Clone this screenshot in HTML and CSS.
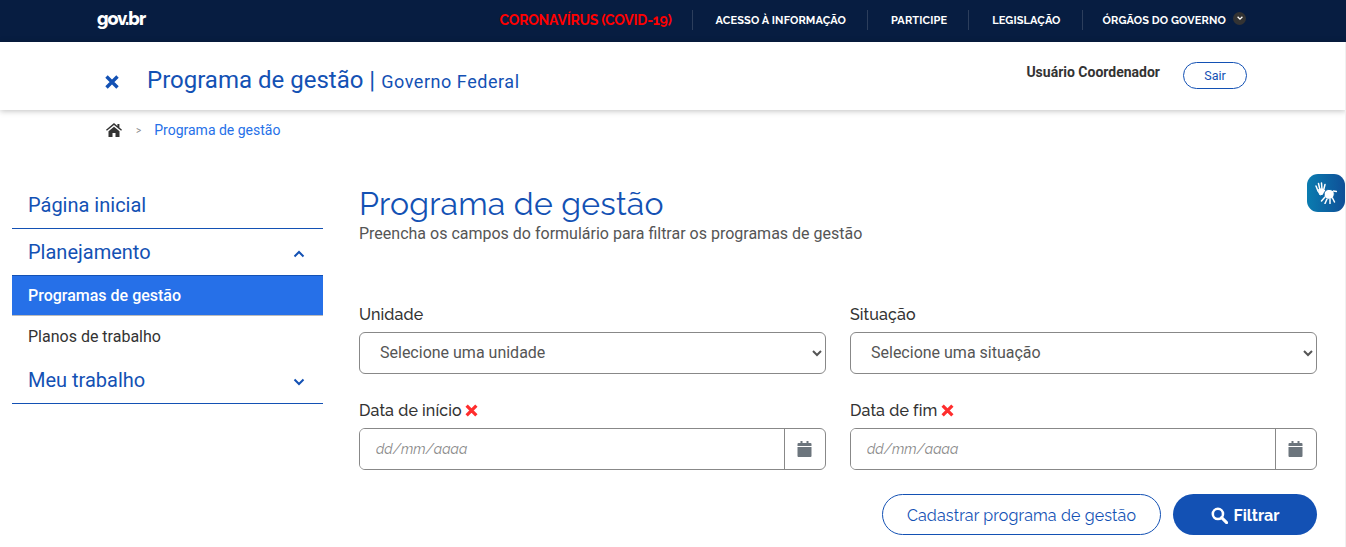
FILE: index.html
```html
<!DOCTYPE html>
<html lang="pt-BR">
<head>
  <meta charset="UTF-8">
  <title>Programa de gestão</title>
  <link rel="stylesheet" href="styles.css">
</head>
<body>

  <!-- Barra gov.br -->
  <div class="gov-bar">
    <a class="gov-logo">gov.br</a>
    <ul class="gov-links">
      <li class="gov-covid">CORONAVÍRUS (COVID-19)</li>
      <li>ACESSO À INFORMAÇÃO</li>
      <li>PARTICIPE</li>
      <li>LEGISLAÇÃO</li>
      <li>ÓRGÃOS DO GOVERNO
        <span class="gov-arrow">
          <svg viewBox="0 0 10 10" width="8" height="8"><path d="M2 3.500 5 6.500 8 3.500" fill="none" stroke="#fff" stroke-width="1.600"/></svg>
        </span>
      </li>
    </ul>
  </div>

  <!-- Header -->
  <div class="header">
    <svg class="header-close" viewBox="0 0 16 16" width="16" height="16"><path d="M2.500 2.500 13.500 13.500M13.500 2.500 2.500 13.500" fill="none" stroke="#1351b4" stroke-width="3.400"/></svg>
    <div class="header-title">Programa de gestão <span class="header-sep">|</span> <small>Governo Federal</small></div>
    <div class="header-user">
      <strong>Usuário Coordenador</strong>
      <button class="btn-sair">Sair</button>
    </div>
  </div>

  <!-- Breadcrumb -->
  <div class="breadcrumb">
    <svg viewBox="0 0 16 14" width="16" height="14"><path d="M8 0 0 6.800l.9 1L8 2l7.100 5.800.9-1-2.600-2.200V1h-2v1.900zM2.500 8.300V14h4v-4h3v4h4V8.300L8 3.800z" fill="#333"/></svg>
    <span class="breadcrumb-sep">&gt;</span>
    <a>Programa de gestão</a>
  </div>

  <div class="page">
    <!-- Sidebar -->
    <nav class="sidebar">
      <div class="side-item side-line">Página inicial</div>
      <div class="side-item side-open">
        Planejamento
        <svg viewBox="0 0 12 8" width="12" height="8"><path d="M1.500 6.500 6 2l4.500 4.500" fill="none" stroke="#1351b4" stroke-width="2"/></svg>
      </div>
      <div class="side-sub active">Programas de gestão</div>
      <div class="side-sub">Planos de trabalho</div>
      <div class="side-item side-line">
        Meu trabalho
        <svg viewBox="0 0 12 8" width="12" height="8"><path d="M1.500 1.500 6 6l4.500-4.500" fill="none" stroke="#1351b4" stroke-width="2"/></svg>
      </div>
    </nav>

    <!-- Content -->
    <main class="content">
      <h1>Programa de gestão</h1>
      <p class="subtitle">Preencha os campos do formulário para filtrar os programas de gestão</p>

      <div class="form-grid">
        <div class="field">
          <label>Unidade</label>
          <select class="form-select"><option>Selecione uma unidade</option></select>
        </div>
        <div class="field">
          <label>Situação</label>
          <select class="form-select"><option>Selecione uma situação</option></select>
        </div>
        <div class="field">
          <label>Data de início <svg class="req" viewBox="0 0 12 12" width="13" height="13"><path d="M1.500 1.500 10.500 10.500M10.500 1.500 1.500 10.500" fill="none" stroke="#ff2d2d" stroke-width="3"/></svg></label>
          <div class="date-group">
            <input class="date-input" type="text" placeholder="dd/mm/aaaa">
            <span class="date-btn">
              <svg viewBox="0 0 14 16" width="15" height="16"><path d="M3 0h2v2h4V0h2v2h2a1 1 0 0 1 1 1v2H0V3a1 1 0 0 1 1-1h2zM0 6h14v9a1 1 0 0 1-1 1H1a1 1 0 0 1-1-1z" fill="#6c757d"/></svg>
            </span>
          </div>
        </div>
        <div class="field">
          <label>Data de fim <svg class="req" viewBox="0 0 12 12" width="13" height="13"><path d="M1.500 1.500 10.500 10.500M10.500 1.500 1.500 10.500" fill="none" stroke="#ff2d2d" stroke-width="3"/></svg></label>
          <div class="date-group">
            <input class="date-input" type="text" placeholder="dd/mm/aaaa">
            <span class="date-btn">
              <svg viewBox="0 0 14 16" width="15" height="16"><path d="M3 0h2v2h4V0h2v2h2a1 1 0 0 1 1 1v2H0V3a1 1 0 0 1 1-1h2zM0 6h14v9a1 1 0 0 1-1 1H1a1 1 0 0 1-1-1z" fill="#6c757d"/></svg>
            </span>
          </div>
        </div>
      </div>

      <div class="actions">
        <button class="btn-outline">Cadastrar programa de gestão</button>
        <button class="btn-primary">
          <svg viewBox="0 0 16 16" width="17" height="17"><circle cx="6.500" cy="6.500" r="4.800" fill="none" stroke="#fff" stroke-width="2.400"/><path d="M10 10l4.700 4.700" stroke="#fff" stroke-width="2.800" stroke-linecap="round"/></svg>
          Filtrar
        </button>
      </div>
    </main>
  </div>

  <!-- VLibras -->
  <div class="vlibras">
    <svg viewBox="0 0 22 22" width="22" height="22" fill="none" stroke="#fff" stroke-linecap="round">
      <path d="M3 9 1 4M5 8 3.500 1.500M7 8 6.500 1M8.500 8.500 10 2.500" stroke-width="1.500"/>
      <path d="M3 9 5 13 8 12 10 9 8 7 4.500 7z" fill="#fff" stroke-width="1"/>
      <path d="M9 12c0-3 3-5 6-4.500s5 2.500 4 6-4 4.500-6.500 3.500S9 14.500 9 12z" fill="#fff" stroke="#0c62a3" stroke-width="1"/>
      <path d="M10 15 6.500 19M12 17 10 21.500M15 17.500 15 21.500M17.500 16 19.500 20M18.500 9 21.500 9.500" stroke-width="1.500"/>
    </svg>
  </div>

</body>
</html>
```

FILE: styles.css
```css
* {
  box-sizing: border-box;
}

html, body {
  height: 547px;
  overflow: hidden;
}

body {
  margin: 0;
  position: relative;
  background: #fff;
  font-family: 'Roboto', sans-serif;
  font-size: 16px;
  color: #333;
}

/* faixa clara na borda direita, abaixo da barra */
body::after {
  content: "";
  position: absolute;
  top: 42px;
  right: 0;
  bottom: 0;
  width: 1px;
  background: #f0f0f0;
}

/* gov.br bar */
.gov-bar {
  display: flex;
  align-items: center;
  justify-content: space-between;
  height: 42px;
  padding: 0 100px 2px 97px;
  background: #071d41;
  color: #fff;
  font-family: 'Raleway', sans-serif;
}

.gov-logo {
  font-size: 18px;
  font-weight: 800;
  letter-spacing: -1px;
  margin-top: -3px;
}

.gov-links {
  display: flex;
  align-items: center;
  list-style: none;
  margin: 0;
  padding: 0;
  font-size: 11px;
  font-weight: 700;
  letter-spacing: 0.13px;
}

.gov-links li {
  display: flex;
  align-items: center;
  height: 20px;
  padding: 0 21px 0 23px;
  border-left: 1px solid #2c3e5c;
}

.gov-links .gov-covid {
  padding: 0 20px 0 0;
  border-left: none;
  color: #f00;
  font-size: 14px;
  letter-spacing: -0.22px;
}

.gov-links li:last-child {
  padding: 0 0 0 20px;
}

.gov-arrow {
  display: flex;
  align-items: center;
  justify-content: center;
  width: 13px;
  height: 13px;
  margin: -4px 0 0 7px;
  border-radius: 50%;
  background: #333;
}

/* header */
.header {
  display: flex;
  align-items: flex-start;
  height: 68px;
  padding: 0 99px 0 104px;
  background: #fff;
  box-shadow: 0 1px 6px rgba(0, 0, 0, 0.25);
}

.header-close {
  margin: 32px 27px 0 0;
}

.header-title {
  margin-top: 23px;
  font-size: 24px;
  line-height: 30px;
  color: #1351b4;
}

.header-title small {
  font-size: 18px;
  letter-spacing: 0.55px;
}

.header-user {
  display: flex;
  align-items: flex-start;
  margin-left: auto;
  margin-top: 20px;
}

.header-user strong {
  margin: 1px 23px 0 0;
  font-size: 14px;
  line-height: 18px;
}

.btn-sair {
  width: 64px;
  height: 27px;
  padding: 0;
  border: 1px solid #1351b4;
  border-radius: 14px;
  background: #fff;
  color: #1351b4;
  font-family: 'Roboto', sans-serif;
  font-size: 12.500px;
}

/* breadcrumb */
.breadcrumb {
  display: flex;
  align-items: center;
  height: 40px;
  padding-left: 106px;
  font-size: 14px;
}

.breadcrumb-sep {
  margin: 0 13px 0 14px;
  font-size: 10px;
  color: #888;
}

.breadcrumb a {
  color: #2670e8;
}

.page {
  display: flex;
  padding: 34px 29px 0 12px;
}

/* sidebar */
.sidebar {
  flex: 0 0 311px;
  margin-top: -2px;
}

.side-item {
  display: flex;
  align-items: center;
  justify-content: space-between;
  height: 47px;
  padding: 0 18px 0 16px;
  font-size: 20px;
  color: #1351b4;
}

.side-item svg {
  margin-top: 3px;
}

.side-open {
  height: 46px;
}

.side-line {
  border-bottom: 1px solid #1351b4;
}

.side-sub {
  display: flex;
  align-items: center;
  height: 41px;
  padding-left: 16px;
  font-size: 16px;
  color: #333;
}

.side-sub.active {
  background: #2670e8;
  border-top: 1px solid #1351b4;
  border-bottom: 1px solid #bbb;
  color: #fff;
  font-weight: 500;
}

/* content */
.content {
  flex: 1;
  margin-left: 36px;
}

h1 {
  margin: 0;
  font-family: 'Raleway', sans-serif;
  font-size: 32px;
  font-weight: 400;
  line-height: 40px;
  letter-spacing: 0.2px;
  color: #1351b4;
}

.subtitle {
  margin: 0;
  font-size: 16px;
  line-height: 20px;
  color: #555;
}

.form-grid {
  display: grid;
  grid-template-columns: 467px 467px;
  column-gap: 24px;
  row-gap: 27px;
  margin-top: 61px;
}

.field label {
  display: block;
  margin-bottom: 7px;
  font-family: 'Raleway', sans-serif;
  font-size: 16px;
  font-weight: 500;
  line-height: 20px;
  letter-spacing: 0.1px;
  color: #333;
}

.req {
  margin-left: -1px;
  vertical-align: -1px;
}

.form-select {
  display: block;
  width: 100%;
  height: 42px;
  padding: 0 0 2px 16px;
  border: 1px solid #888;
  border-radius: 6px;
  background: #fff;
  color: #555;
  font-family: 'Roboto', sans-serif;
  font-size: 16px;
}

.date-group {
  display: flex;
  height: 42px;
  border: 1px solid #888;
  border-radius: 6px;
  overflow: hidden;
}

.date-input {
  flex: 1;
  min-width: 0;
  padding: 0 16px;
  border: none;
  outline: none;
  font-family: 'Raleway', sans-serif;
  font-size: 14px;
  font-style: italic;
}

.date-input::placeholder {
  color: #888;
}

.date-btn {
  display: flex;
  align-items: center;
  justify-content: center;
  width: 41px;
  padding-right: 2px;
  border-left: 1px solid #888;
}

.actions {
  display: flex;
  justify-content: flex-end;
  gap: 12px;
  margin-top: 24px;
}

.actions button {
  height: 41px;
  padding-top: 2px;
  border-radius: 21px;
  font-family: 'Raleway', sans-serif;
  font-size: 16px;
}

.btn-outline {
  width: 279px;
  border: 1px solid #1351b4;
  background: #fff;
  color: #1351b4;
  letter-spacing: 0.13px;
}

.btn-primary {
  display: flex;
  align-items: center;
  justify-content: center;
  gap: 6px;
  width: 144px;
  border: none;
  background: #1351b4;
  color: #fff;
  font-weight: 700;
}

/* vlibras */
.vlibras {
  position: absolute;
  top: 174px;
  right: 1px;
  display: flex;
  align-items: center;
  justify-content: center;
  width: 38px;
  height: 38px;
  border-radius: 11px;
  background: linear-gradient(90deg, #0a7cb0, #0f4f97);
}
```
